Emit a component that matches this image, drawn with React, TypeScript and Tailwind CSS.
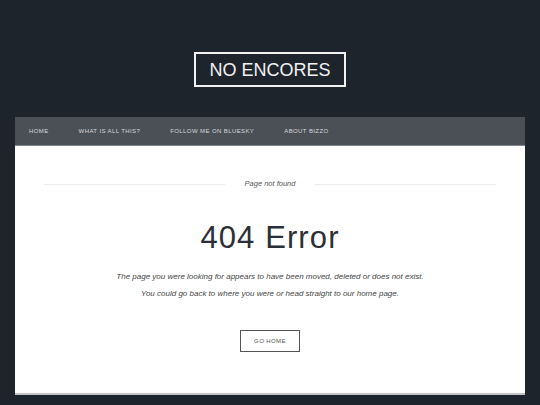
export default function App() {
  const nav = ['Home', 'What is all this?', 'Follow me on Bluesky', 'About Bizzo'];

  return (
    <div className="min-h-screen bg-[#1e242c] px-[15px] pt-[52px] pb-[10px] font-['Liberation_Sans',Arial,sans-serif]">
      {/* logo */}
      <div className="flex justify-center">
        <div className="flex h-[35px] items-center border-2 border-[#f2f2f2] px-[13px] text-[18px] leading-none text-[#f2f2f2]">
          NO ENCORES
        </div>
      </div>

      {/* nav */}
      <nav className="mt-[30px] flex h-[29px] items-center gap-[30px] border-b border-[#85888e] bg-[#4b4f56] pl-[14px]">
        {nav.map((item) => (
          <a key={item} className="text-[6px] uppercase tracking-[0.4px] text-[#d6d8db]">
            {item}
          </a>
        ))}
      </nav>

      {/* content */}
      <main className="flex h-[249px] flex-col items-center border-b-2 border-[#c4c4c4] bg-white px-[29px] pt-[33px]">
        <div className="flex w-full items-center">
          <div className="h-px flex-1 bg-[#ececec]" />
          <span className="px-[20px] text-[7.5px] leading-[10px] text-[#555] italic">Page not found</span>
          <div className="h-px flex-1 bg-[#ececec]" />
        </div>

        <h1 className="mt-[33px] text-[31px] leading-[31px] tracking-[1.1px] text-[#2b3038]">404 Error</h1>

        <div className="mt-[15px] text-center text-[8px] leading-[17px] text-[#444] italic">
          <p>The page you were looking for appears to have been moved, deleted or does not exist.</p>
          <p>You could go back to where you were or head straight to our home page.</p>
        </div>

        <button className="mt-[28px] flex h-[22px] w-[60px] items-center justify-center border border-[#555] text-[6px] uppercase tracking-[0.4px] text-[#555]">
          Go Home
        </button>
      </main>
    </div>
  );
}
